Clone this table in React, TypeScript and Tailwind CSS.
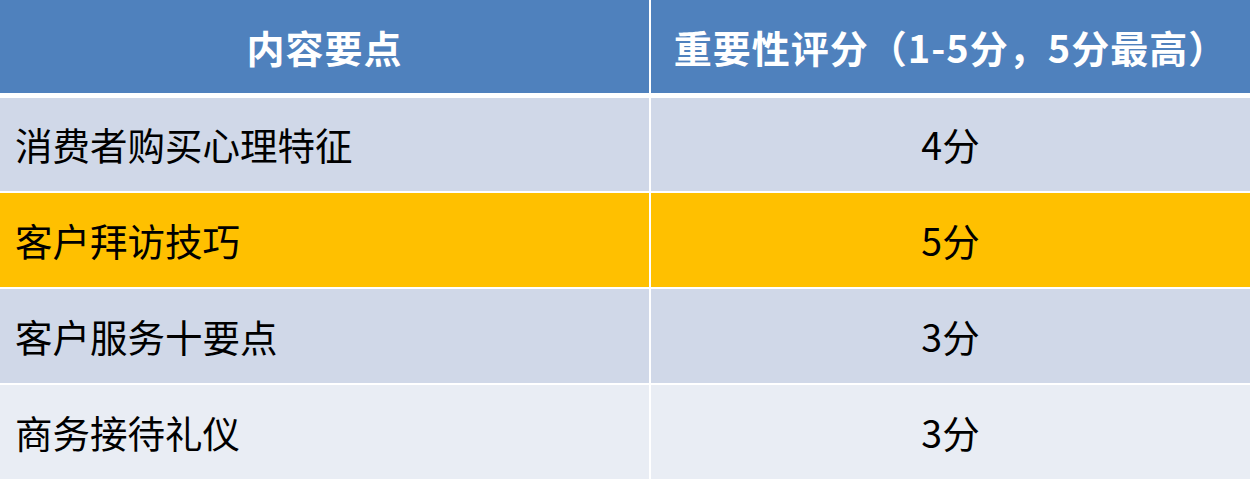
const rows = [
  { name: "消费者购买心理特征", score: "4分", bg: "bg-[#d0d8e8]" },
  { name: "客户拜访技巧", score: "5分", bg: "bg-[#ffc000]" },
  { name: "客户服务十要点", score: "3分", bg: "bg-[#d0d8e8]" },
  { name: "商务接待礼仪", score: "3分", bg: "bg-[#e9edf4]" },
];

export default function App() {
  return (
    <div
      className="h-[481px] w-[1253px] bg-white"
      style={{ fontFamily: '"Microsoft YaHei", "Noto Sans CJK SC", "Noto Sans", sans-serif' }}
    >
      <div className="grid h-[93px] grid-cols-[649px_599px] gap-x-[2px] bg-white">
        <div className="flex items-center justify-center bg-[#4f81bd] text-[38px] font-bold tracking-[1px] text-white">
          内容要点
        </div>
        <div className="flex items-center justify-center bg-[#4f81bd] text-[38px] font-bold tracking-[1px] text-white">
          重要性评分（1-5分，5分最高）
        </div>
      </div>

      <div className="mt-[5px] flex flex-col gap-[2px]">
        {rows.map((row, i) => (
          <div
            key={row.name}
            className={`grid grid-cols-[649px_599px] gap-x-[2px] ${i === 0 ? "h-[93px]" : "h-[94px]"}`}
          >
            <div className={`flex items-center pl-[15px] text-[37.5px] text-black ${row.bg}`}>{row.name}</div>
            <div className={`flex items-center justify-center text-[37.5px] text-black ${row.bg}`}>{row.score}</div>
          </div>
        ))}
      </div>
    </div>
  );
}
